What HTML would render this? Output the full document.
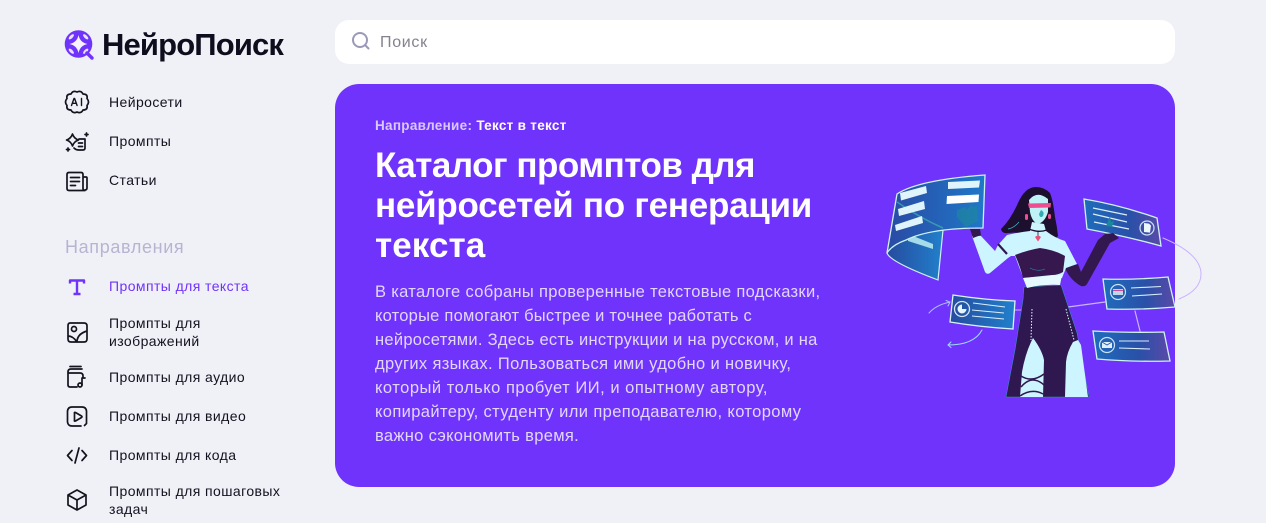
<!DOCTYPE html>
<html lang="ru"><head><meta charset="utf-8"><title>НейроПоиск</title>
<style>
html,body{margin:0;padding:0}
body{width:1266px;height:523px;background:#f0f1f7;overflow:hidden;position:relative;font-family:"Liberation Sans",sans-serif;color:#12121f}
.t{position:absolute;white-space:nowrap}
.n{font-size:14px;line-height:18px;left:109px;letter-spacing:.42px}
svg{position:absolute;left:0;top:0}
#card{position:absolute;left:335px;top:84px;width:840px;height:403px;border-radius:24px;background:#7033fb}
#search{position:absolute;left:335px;top:20px;width:840px;height:44px;border-radius:14px;background:#fff}
</style></head><body>
<div id="search"></div>
<div id="card"></div>
<div class="t" style="left:102px;top:26px;font-size:31px;line-height:38px;font-weight:700;letter-spacing:-.85px;color:#0d0d1e">НейроПоиск</div>
<div class="t n" style="top:93px">Нейросети</div>
<div class="t n" style="top:132px">Промпты</div>
<div class="t n" style="top:171px">Статьи</div>
<div class="t" style="left:65px;top:236px;font-size:18px;line-height:22px;color:#b5b5d2;letter-spacing:.65px">Направления</div>
<div class="t n" style="top:277px;color:#7033fb">Промпты для текста</div>
<div class="t n" style="top:314px">Промпты для<br>изображений</div>
<div class="t n" style="top:368px">Промпты для аудио</div>
<div class="t n" style="top:407px">Промпты для видео</div>
<div class="t n" style="top:446px">Промпты для кода</div>
<div class="t n" style="top:482px">Промпты для пошаговых<br>задач</div>
<div class="t" style="left:380px;top:33px;font-size:16px;line-height:20px;color:#83838f;letter-spacing:.7px">Поиск</div>
<div class="t" style="left:375px;top:117px;font-size:13.5px;line-height:18px;font-weight:700;color:#d9c9ff;letter-spacing:.3px">Направление: <span style="color:#fff">Текст в текст</span></div>
<div class="t" style="left:375px;top:146px;font-size:35px;line-height:40px;font-weight:700;color:#fff"><span style="letter-spacing:-.5px">Каталог промптов для</span><br><span style="letter-spacing:-.26px">нейросетей по генерации</span><br><span style="letter-spacing:.1px">текста</span></div>
<div class="t" style="left:375px;top:280px;font-size:16.5px;line-height:24px;color:#e2d6ff;letter-spacing:.32px">В каталоге собраны проверенные текстовые подсказки,<br><span style="letter-spacing:.23px">которые помогают быстрее и точнее работать с</span><br><span style="letter-spacing:.28px">нейросетями. Здесь есть инструкции и на русском, и на</span><br><span style="letter-spacing:.36px">других языках. Пользоваться ими удобно и новичку,</span><br><span style="letter-spacing:.52px">который только пробует ИИ, и опытному автору,</span><br><span style="letter-spacing:.38px">копирайтеру, студенту или преподавателю, которому</span><br>важно сэкономить время.</div>

<svg width="1266" height="523" viewBox="0 0 1266 523" fill="none">
<defs>
<linearGradient id="g" x1="0" y1="0" x2="1" y2="0"><stop offset="0" stop-color="#2a4aa4"/><stop offset="1" stop-color="#1f78c8"/></linearGradient>
<linearGradient id="h" x1="0" y1="0" x2="1" y2="0"><stop offset="0" stop-color="#1f6cbc"/><stop offset=".6" stop-color="#2a50a8"/><stop offset="1" stop-color="#5a4aa8"/></linearGradient>
<linearGradient id="k" x1="0" y1="0" x2="1" y2="0"><stop offset="0" stop-color="#264b9f"/><stop offset="1" stop-color="#2180cc"/></linearGradient>
</defs>
<!-- search icon -->
<g stroke="#9a9ab8" stroke-width="2" stroke-linecap="round"><circle cx="360" cy="40" r="7"/><path d="M365.500 45.500L368.500 48.500"/></g>
<!-- logo -->
<circle cx="78.500" cy="44" r="13.800" fill="#7033fb"/>
<g fill="#e9e2ff">
<ellipse cx="71.300" cy="36.800" rx="3.400" ry="1.500" transform="rotate(-45 71.300 36.800)"/>
<ellipse cx="85.700" cy="36.800" rx="3.400" ry="1.500" transform="rotate(45 85.700 36.800)"/>
<ellipse cx="71.300" cy="51.200" rx="3.400" ry="1.500" transform="rotate(45 71.300 51.200)"/>
<ellipse cx="85.700" cy="51.200" rx="3.400" ry="1.500" transform="rotate(-45 85.700 51.200)"/>
</g>
<path d="M78.500 35Q80 42.500 87.500 44Q80 45.500 78.500 53Q77 45.500 69.500 44Q77 42.500 78.500 35Z" fill="#f6f3ff"/>
<path d="M87 53l5 5" stroke="#7033fb" stroke-width="3.400" stroke-linecap="round"/>
<!-- nav icons -->
<g stroke="#14141f" stroke-width="1.700" stroke-linecap="round" stroke-linejoin="round">
<path d="M77 92Q81 90 83 94Q88 94 87 98.500Q90 102 87 105.500Q88 110 83 110Q81 114 77 112Q73 114 71 110Q66 110 67 105.500Q64 102 67 98.500Q66 94 71 94Q73 90 77 92Z"/>
<path d="M71.500 105.500l2.500-7h.6l2.500 7M72.300 103.300h4M81.500 98.500v7" stroke-width="1.400"/>
<path d="M72.500 134Q74 138.500 78.500 140Q74 141.500 72.500 146Q71 141.500 66.500 140Q71 138.500 72.500 134Z"/>
<path d="M79 139h6v9q0 2-2 2h-4q-3 0-5-2M78.500 143h4M78.500 146.500h4M86.500 133v3M85 134.500h3M68 148v3M66.500 149.500h3"/>
<path d="M67 174.500q0-2 2-2h12q2 0 2 2v14q0 2 2 2H69q-2 0-2-2zM83 177h3q1 0 1 1v10q0 2-2 2M70.500 177.500h9M70.500 181.500h9M70.500 185.500h5"/>
<path d="M70 323h14q3 0 3 3v13q0 3-3 3H71q-3 0-3-3v-13q0-3 2-3zM68 336q5 0 9 6M77 342q0-8 10-11"/>
<circle cx="74" cy="329" r="2.500"/>
<path d="M68 373v-1q0-3 3-3h11M70 366.500h11M68 373h12q3 0 3 3v2M68 373v12q0 2 2 2h7M83 378h2M82 378v7"/>
<circle cx="80" cy="385" r="2"/>
<path d="M72 407h10q4 0 4.500 4v12.500M81 426H72q-4 0-4.500-4v-11q.5-4 4.500-4M86.500 423.500l-2 2"/>
<path d="M74.500 413.500q-.5-1.500 1-1l6 3.500q1 .8 0 1.500l-6 3.500q-1.500.5-1-1z"/>
<path d="M72 450.500l-4.500 5 4.500 5M82 450.500l4.500 5-4.500 5M79 448l-4 15"/>
<path d="M77 490l9 5v10l-9 5-9-5v-10zM68 495l9 5 9-5M77 500v10"/>
</g>
<g stroke="#7033fb" stroke-width="2.400" stroke-linejoin="round"><path d="M70 283.500v-3h14v3M77 281v13M73.500 294h7"/></g>

<!-- connectors -->
<g stroke="#c9b4ff" stroke-width="1" fill="none" stroke-linecap="round">
<path d="M1163 238Q1201 254 1201 274Q1201 290 1179 299"/>
<path d="M1068 307L1105 302" stroke-width="1.200"/>
<path d="M1135 311L1140 331" stroke-width="1.200"/>
<path d="M1015 310L1022 310"/>
</g>
<g stroke="#a9c0ff" stroke-width="1" fill="none" stroke-linecap="round">
<path d="M929 313Q936 305 950 302M946 300.500L950 302 948 306"/>
<path d="M982 330Q974 345 948 345M951 342L948 345 951 347.500" stroke="#9fdcff"/>
</g>

<!-- big curved panel -->
<path d="M887 253Q890 262 938 280L943 230L897 215Z" fill="url(#k)" stroke="#cdf3ee" stroke-width="1.200"/>
<path d="M908 234L933 244 933 249 908 241Z" fill="#a6dbe9"/>
<path d="M897 194Q918 180 985 175L983 228Q930 228 906 240Q892 245 887 253Z" fill="url(#g)" stroke="#cdf3ee" stroke-width="1.300"/>
<path d="M897 202Q920 218 943 228" stroke="#3fb2b0" stroke-width="1.500" opacity=".7"/>
<g fill="#dff5fb">
<path d="M900 193L926 186 927 193 901 200.500Z"/>
<path d="M898 209L924 201 925 209 899 216Z"/>
<path d="M895 225L922 216 923 223 896 231Z"/>
<path d="M948 182L980 180.500 979 187.500 948 189Z"/>
</g>
<path d="M947 196L979 194.500 978.500 202 946.500 204Z" fill="#fff"/>
<path d="M957 210l8-3 2 3 5-6 1 3 4-1 1 15-12 6-9-10z" fill="#1e8a9a" opacity=".6"/>

<!-- panel right 2 -->
<path d="M1084 199Q1120 205 1157 218L1161 246Q1125 236 1087 229Z" fill="url(#h)" stroke="#cdf3ee" stroke-width="1.300"/>
<g stroke="#d9eef8" stroke-width="1.200"><path d="M1093 208l34 7M1093 214l34 8M1094 222l35 7"/></g>
<circle cx="1147" cy="228" r="7" stroke="#c9e2f2" stroke-width="1.200"/>
<path d="M1144 223l5 .6 2 2 -1 7-6-.6z" fill="#eaf7fb"/>
<path d="M1108 221l2-5 1 6 3-1-2 6-6-1z" fill="#1a8a9a"/>

<!-- panel 3 -->
<path d="M1103 279Q1135 280 1168 277L1175 307Q1140 310 1107 309Z" fill="url(#h)" stroke="#cdf3ee" stroke-width="1.300"/>
<circle cx="1118" cy="292" r="7.500" stroke="#c9e2f2" stroke-width="1.200"/>
<path d="M1113 289h10v6h-10z" fill="#bcd6ea"/>
<path d="M1113 290.500h10" stroke="#d04a9a" stroke-width="1"/>
<g stroke="#d9eef8" stroke-width="1.100"><path d="M1131 288l30-1.500M1132 296l30-2"/></g>

<!-- panel 4 -->
<path d="M1093 331Q1130 333 1164 332L1170 361Q1130 362 1097 359Z" fill="url(#h)" stroke="#cdf3ee" stroke-width="1.300"/>
<circle cx="1107" cy="345" r="7.500" stroke="#c9e2f2" stroke-width="1.200"/>
<path d="M1102 342h10v6h-10z" fill="#dff0f8"/>
<path d="M1102 342l5 3 5-3" stroke="#2a50a8" stroke-width=".8"/>
<g stroke="#d9eef8" stroke-width="1.100"><path d="M1119 341h30M1119 348l31 1"/></g>

<!-- panel 5 -->
<path d="M953 295Q985 300 1015 301L1013 329Q980 327 950 322Z" fill="url(#k)" stroke="#d8f5f5" stroke-width="1.300"/>
<circle cx="962" cy="309" r="7.500" stroke="#d3e6f2" stroke-width="1.300"/>
<path d="M962 304.500a4.500 4.500 0 1 0 4.500 4.500h-4.500z" fill="#e5f5fb"/>
<g stroke="#d9eef8" stroke-width="1.100"><path d="M973 303l32 4M972 310l32 3M972 316l32 3"/></g>

<!-- figure -->
<!-- skirt -->
<path d="M1024 287L1061 285L1066 300L1077 333L1084 370L1089 397H1006L1015 350L1023 300Z" fill="#2f174f" stroke="#2cb5c4" stroke-width=".4"/>
<path d="M1031 342Q1025 355 1022 372L1020 397H1043L1044 360Q1042 350 1033 338Z" fill="#cdf5ff"/>
<path d="M1073 342Q1067 352 1066 362L1065 397H1088L1081 345L1078 340Z" fill="#cdf5ff"/>
<g stroke="#2f174f" stroke-width="1.500"><path d="M1021 376Q1032 383 1044 374M1021 387Q1032 374 1044 385M1020 396Q1032 388 1043 394"/></g>
<g stroke="#dff" stroke-width="1" stroke-dasharray="1.500 1.500"><path d="M1032 309L1031 340"/><path d="M1066 309L1074 340"/></g>
<!-- right glove -->
<path d="M1065 268L1078 264L1081 272L1098 240L1105 234L1113 233L1119 238L1110 243L1087 284Q1085 287 1081 286Q1070 280 1065 268Z" fill="#33184f"/>
<!-- hair back -->
<path d="M1036 187Q1025 187 1018 203Q1011 219 1001 229Q1002 234 1008 233Q1018 232 1026 234L1045 230L1050 238Q1056 239 1058 236Q1057 226 1055 217Q1053 200 1050 193Q1044 187 1036 187Z" fill="#1d0f2e"/>
<path d="M1019 222Q1014 228 1008 229" stroke="#3fb5c8" stroke-width=".7"/>
<!-- arm / torso -->
<path d="M981 236L995 251L998 245L1007 235Q1020 232 1030 231L1032 222L1044 224L1046 231Q1055 238 1065 241L1077 264L1066 268L1062 278L1024 280L1015 256L1011 256L1008 258L990 273Q987 275 985 272L972 236Z" fill="#cdf5ff"/>
<path d="M998 244l9 10" stroke="#2f174f" stroke-width="2.200"/>
<!-- left glove -->
<path d="M970 229L980 229L981 235L973 238Z" fill="#33184f"/>
<!-- face -->
<path d="M1029 200Q1037 190 1048 199L1048 212Q1045 222 1038 224Q1032 222 1030 212Z" fill="#bff2f7"/>
<path d="M1028 203.500L1051 203L1050.500 207.500L1029 208Z" fill="#ee4e90"/>
<path d="M1041 210Q1045 212 1043 216Q1040 219 1039 214Z" fill="#35a9b4"/>
<rect x="1025" y="214" width="3" height="6" rx="1.500" fill="#ee4e90"/>
<rect x="1048" y="214" width="3" height="5" rx="1.500" fill="#ee4e90"/>
<!-- choker -->
<path d="M1029 229Q1038 233 1047 230" stroke="#1d0f2e" stroke-width="1.400"/>
<path d="M1038 231v5" stroke="#1d0f2e" stroke-width=".8"/>
<path d="M1038 235l3 2-3 4.500-3-4.500z" fill="#ee4e78"/>
<!-- bodice -->
<path d="M1015 255Q1028 250 1040 248Q1055 250 1065 256L1063 272Q1058 275 1052 275L1023 278Q1020 266 1015 255Z" fill="#36184f"/>
<path d="M1030 268Q1038 272 1045 269" stroke="#2a8fa4" stroke-width=".6"/>
<!-- belt -->
<path d="M1023 278L1062 275L1060 285Q1043 284 1027 288Z" fill="#e5faff"/>
</svg>
</body></html>
